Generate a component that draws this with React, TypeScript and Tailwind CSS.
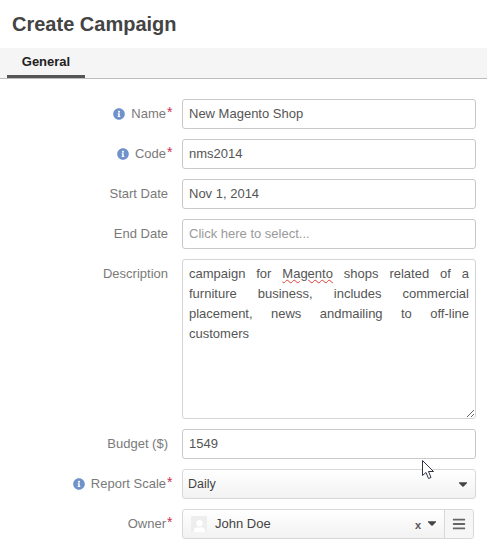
import React from "react";
import { FaInfoCircle, FaBars, FaCaretDown, FaUser } from "react-icons/fa";

function Label({ text, info, req }: { text: string; info?: boolean; req?: boolean }) {
  return (
    <div className={`w-[174px] shrink-0 flex items-center justify-end h-[29px] text-[13px] text-[#7a7a7a] ${req ? "" : "pr-[6px]"}`}>
      {info && <FaInfoCircle className="text-[#6e92c9] text-[12px] mr-[6px]" />}
      <span>{text}</span>
      {req && <span className="text-[#c9304f] text-[14px] leading-none -mt-[4px] ml-[1px] w-[7px]">*</span>}
    </div>
  );
}

function Field({ children }: { children: React.ReactNode }) {
  return <div className="flex items-start gap-[8px] pr-[11px]">{children}</div>;
}

function Input({ value, placeholder }: { value?: string; placeholder?: boolean }) {
  return (
    <div className={`flex-1 h-[30px] border border-[#c9c9c9] rounded-[3px] bg-white px-[6px] pb-[1px] flex items-center text-[13px] ${placeholder ? "text-[#9a9a9a]" : "text-[#555555]"}`}>
      {value}
    </div>
  );
}

export default function App() {
  return (
    <div className="w-[487px] h-[557px] bg-white overflow-hidden relative font-['Liberation_Sans',Arial,sans-serif]">
      <h1 className="px-[12px] pt-[11px] h-[48px] text-[20px] leading-[26px] font-bold text-[#444444]">Create Campaign</h1>
      <div className="h-[31px] bg-[#f5f5f5] border-b border-[#bdbdbd] pl-[7px]">
        <div className="w-[78px] h-[30px] border-b-[3px] border-[#555555] pt-[1px] flex items-center justify-center text-[13px] font-bold text-[#222222]">General</div>
      </div>
      <div className="pt-[20px] flex flex-col gap-[10px]">
        <Field><Label text="Name" info req /><Input value="New Magento Shop" /></Field>
        <Field><Label text="Code" info req /><Input value="nms2014" /></Field>
        <Field><Label text="Start Date" /><Input value="Nov 1, 2014" /></Field>
        <Field><Label text="End Date" /><Input value="Click here to select..." placeholder /></Field>
        <Field>
          <Label text="Description" />
          <div className="flex-1 h-[160px] border border-[#d4d4d4] rounded-[3px] bg-white px-[6px] py-[4px] text-[13px] leading-[20px] text-[#555555] text-justify resize-y overflow-auto">
            campaign for <span className="underline decoration-wavy decoration-[#e0403a] decoration-1">Magento</span> shops related of a furniture business, includes commercial placement, news andmailing to off-line customers
          </div>
        </Field>
        <Field><Label text="Budget ($)" /><Input value="1549" /></Field>
        <Field>
          <Label text="Report Scale" info req />
          <div className="flex-1 h-[30px] border border-[#d8d8d8] rounded-[3px] bg-gradient-to-b from-white to-[#f2f2f2] pl-[5px] pr-[5px] flex items-center justify-between text-[12.5px] text-[#444444]">
            <span>Daily</span>
            <FaCaretDown className="text-[#444444] text-[14px] -mt-[1px]" />
          </div>
        </Field>
        <div className="flex items-start gap-[8px] pr-[13px]">
          <Label text="Owner" req />
          <div className="flex-1 h-[30px] border border-[#d8d8d8] rounded-[3px] bg-gradient-to-b from-white to-[#f2f2f2] flex items-center text-[13px] text-[#444444]">
            <div className="ml-[8px] w-[16px] h-[16px] bg-[#eeeeee] flex items-end justify-center overflow-hidden">
              <FaUser className="text-white text-[13px] -mb-[1px]" />
            </div>
            <span className="ml-[8px] flex-1">John Doe</span>
            <span className="text-[11px] font-bold text-[#555555] mr-[4px] mt-[2px]">x</span>
            <FaCaretDown className="text-[#444444] text-[14px] mr-[5px] -mt-[2px]" />
            <div className="w-[29px] h-[28px] border-l border-[#d8d8d8] bg-[#f6f6f6] rounded-r-[3px] flex items-center justify-center">
              <FaBars className="text-[#666666] text-[14px]" />
            </div>
          </div>
        </div>
      </div>
      <svg className="absolute left-[422px] top-[460px]" width="14" height="20" viewBox="0 0 14 20">
        <path d="M0.5 0.5V15.5L4 12.5L6.5 18.5L9 17.5L6.5 11.5H11.5Z" fill="#ffffff" stroke="#2f3342" strokeWidth="1" />
      </svg>
    </div>
  );
}
